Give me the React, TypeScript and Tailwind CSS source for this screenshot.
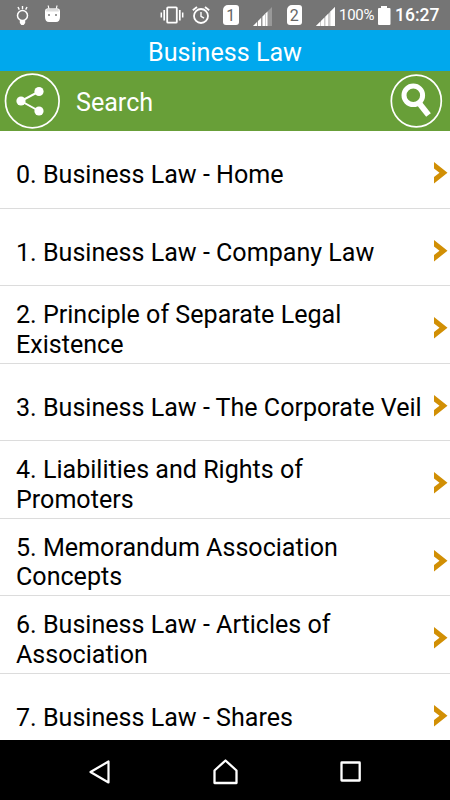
const chapters = [
  "0. Business Law - Home",
  "1. Business Law - Company Law",
  "2. Principle of Separate Legal Existence",
  "3. Business Law - The Corporate Veil",
  "4. Liabilities and Rights of Promoters",
  "5. Memorandum Association Concepts",
  "6. Business Law - Articles of Association",
  "7. Business Law - Shares",
];

const BulbIcon = () => (
  <svg width="14" height="22" viewBox="0 0 14 22" fill="none" stroke="white">
    <circle cx="7.5" cy="11.5" r="5" strokeWidth="1.5" />
    <path d="M7.5 2v3.2M3 3l1.3 2.6M12 3l-1.3 2.6" strokeWidth="1.4" />
    <path d="M4.800 16h5.400v3l-1.500 2h-2.400L4.800 19z" fill="white" stroke="none" />
  </svg>
);

const RobotIcon = () => (
  <svg width="15" height="18" viewBox="0 0 15 18">
    <path d="M3.2 0.5l0.8 4M12 0.5l-0.8 4" stroke="white" strokeWidth="1.2" />
    <path d="M2 3.5h11q2 0 2 2.5v6q0 5-4 5H4q-4 0-4-5V6q0-2.5 2-2.5z" fill="white" />
    <path d="M2 3.5h11l1 3H1z" fill="#ddd" />
    <path d="M3 9h2v2H3zM10 9h2v2h-2z" fill="#999" />
  </svg>
);

const VibrateIcon = () => (
  <svg width="24" height="18" viewBox="0 0 24 18" fill="none" stroke="white">
    <rect x="7.2" y="1.3" width="9.6" height="15.4" rx="0.8" strokeWidth="1.8" />
    <path d="M4.2 4v10.5M19.8 4v10.5" strokeWidth="1.7" />
    <path d="M1.3 6.5v5M22.7 6.5v5" strokeWidth="1.5" />
  </svg>
);

const AlarmIcon = () => (
  <svg width="18" height="18" viewBox="0 0 18 18" fill="none" stroke="white">
    <circle cx="9" cy="10" r="7" strokeWidth="1.8" />
    <path d="M9 6v4.300l3 1.900" strokeWidth="1.4" />
    <path d="M0.8 4.200L5 1M17.200 4.200L13 1" strokeWidth="1.8" />
  </svg>
);

const SimCard = ({ slot }: { slot: number }) => (
  <div className="h-5 w-[15.5px] rounded-[3px] rounded-tl-[5px] bg-white text-center text-[16px] leading-[21px] text-[#666]">
    {slot}
  </div>
);

const SignalIcon = ({ weak }: { weak?: boolean }) => (
  <svg width="19" height="19" viewBox="0 0 19 19">
    <path d="M0 19L19 0V19z" fill={weak ? "#999" : "#ccc"} />
    <path d="M0 19L4 15V19zM5 14L8 11V19H5zM9.500 9.500L12 7V19H9.500z" fill="white" />
    {weak ? (
      <path d="M12.500 6.500L14.500 4.500V19H12.500z" fill="white" />
    ) : (
      <path d="M14.500 4.500L19 0V19H14.500z" fill="white" />
    )}
  </svg>
);

const BatteryIcon = () => (
  <svg width="13" height="19" viewBox="0 0 13 19">
    <path d="M3 0h6v2h2.5q1 0 1 1v15q0 1-1 1H1q-1 0-1-1V3q0-1 1-1h2z" fill="white" />
  </svg>
);

const ShareIcon = () => (
  <svg width="56" height="56" viewBox="0 0 56 56" fill="none" stroke="white">
    <circle cx="28.300" cy="28" r="26.800" strokeWidth="1.700" />
    <path d="M35 18.500L17 28l18 10" strokeWidth="2" />
    <g fill="white" stroke="none">
      <circle cx="35" cy="18.500" r="4.600" />
      <circle cx="17" cy="28" r="4.600" />
      <circle cx="35" cy="38" r="4.600" />
    </g>
  </svg>
);

const SearchIcon = () => (
  <svg width="53" height="54" viewBox="0 0 53 54" fill="none" stroke="white">
    <ellipse cx="26.300" cy="27" rx="25" ry="25.900" strokeWidth="1.700" />
    <circle cx="23.300" cy="21.300" r="9.300" strokeWidth="5" />
    <path d="M29 29L38.500 41" strokeWidth="6" />
  </svg>
);

const Chevron = () => (
  <svg className="shrink-0" width="14" height="22" viewBox="0 0 14 22">
    <path d="M0 0L13.500 10.700L0 21.500V15L5.500 10.700L0 6.500z" fill="#d18f04" />
  </svg>
);

export default function App() {
  return (
    <div className="flex h-[800px] w-[450px] flex-col overflow-hidden bg-white font-['Roboto',sans-serif]">
      {/* Status bar */}
      <div className="flex h-[30px] shrink-0 items-center bg-[#757575] pl-[15px] text-white">
        <BulbIcon />
        <div className="-mt-[3px] ml-4"><RobotIcon /></div>
        <div className="ml-[100px]"><VibrateIcon /></div>
        <div className="ml-2"><AlarmIcon /></div>
        <div className="ml-[13px]"><SimCard slot={1} /></div>
        <div className="ml-3.5 mt-0.5"><SignalIcon weak /></div>
        <div className="ml-[15px]"><SimCard slot={2} /></div>
        <div className="ml-[13.5px] mt-0.5"><SignalIcon /></div>
        <span className="ml-[4.5px] w-[36px] whitespace-nowrap text-[15px] leading-[32px] tracking-[-0.3px]">100%</span>
        <div className="ml-[3px]"><BatteryIcon /></div>
        <span className="ml-1 text-[17.5px] font-medium leading-[32px]">16:27</span>
      </div>

      {/* Title */}
      <h1 className="h-[41px] shrink-0 bg-[#00a8ed] text-center text-[25.1px] leading-[45px] text-white">
        Business Law
      </h1>

      {/* Search bar */}
      <div className="flex h-[60px] shrink-0 items-center bg-[#689f38] pl-1 pr-[7px] text-white">
        <ShareIcon />
        <span className="ml-4 flex-1 pt-1 text-[25.1px] leading-[60px]">Search</span>
        <SearchIcon />
      </div>

      {/* Chapter list */}
      <ul className="min-h-0 flex-1 overflow-hidden">
        {chapters.map((title) => (
          <li
            key={title}
            className="flex h-[77.5px] items-center border-b border-[#dcdcdc] pr-0.5 pl-4 text-black"
          >
            <span className="mr-2 flex-1 pt-[11px] text-[25.08px] leading-[29.3px]">{title}</span>
            <div className="pt-2"><Chevron /></div>
          </li>
        ))}
      </ul>

      {/* Navigation bar */}
      <div className="flex h-[60px] shrink-0 items-center justify-between bg-black px-[88px] pt-1">
        <svg width="22" height="26" viewBox="0 0 22 26" fill="none" stroke="white" strokeWidth="2.2">
          <path d="M20.500 2.500v21L2.500 13z" strokeLinejoin="round" />
        </svg>
        <svg width="26" height="26" viewBox="0 0 26 26" fill="none" stroke="white" strokeWidth="2.3">
          <path d="M2.500 24V11.500L13.500 1.500l11 10V24z" strokeLinejoin="round" />
        </svg>
        <svg width="22" height="22" viewBox="0 0 22 22" fill="none" stroke="white" strokeWidth="2.3">
          <rect x="1.500" y="1.500" width="18.200" height="18" rx="0.300" />
        </svg>
      </div>
    </div>
  );
}
